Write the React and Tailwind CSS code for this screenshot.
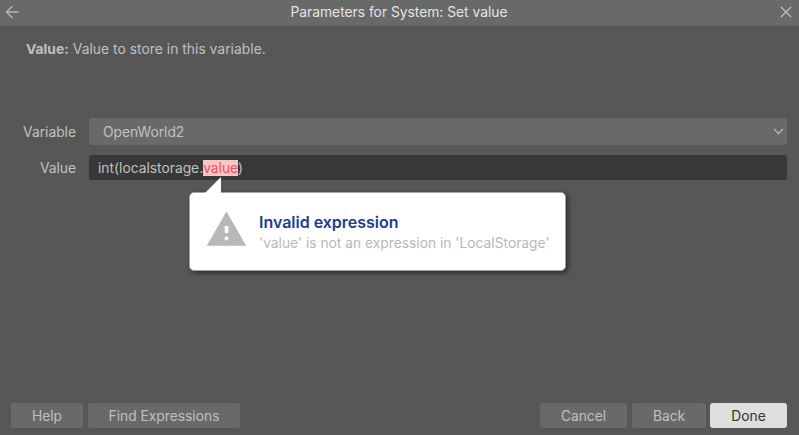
import React from "react";

const Button = ({ className, children }) => (
  <button
    className={`h-[25px] rounded-[3px] text-[13.8px] leading-[26px] ${className}`}
  >
    {children}
  </button>
);

const ErrorTip = () => (
  <div className="absolute left-[100px] top-[37px] w-[377px] h-[79px] rounded-[5px] border border-[#a3a3a3] bg-white shadow-[2px_2px_5px_rgba(0,0,0,0.5)] flex pl-[15px] pt-[15px]">
    {/* Pointer */}
    <svg
      className="absolute left-[15px] -top-[16px] w-[17px] h-[17px]"
      viewBox="0 0 17 17"
    >
      <path d="M0 17V16L16 0V17z" fill="#fff" />
    </svg>

    <svg className="w-[43px] h-[43px] shrink-0" viewBox="0 0 24 24">
      <path
        fill="#b8b8b8"
        d="M1 21h22L12 2 1 21zm12-3h-2v-2h2v2zm0-4h-2v-4h2v4z"
      />
    </svg>
    <div className="ml-[11px] pt-[3px] whitespace-nowrap">
      <h2 className="text-[16px] leading-[22px] font-semibold tracking-[-0.02px] text-[#1a3c94]">
        Invalid expression
      </h2>
      <p className="text-[13.8px] leading-5 text-[#b8b8b8]">
        'value' is not an expression in 'LocalStorage'
      </p>
    </div>
  </div>
);

const App = () => {
  return (
    <div className="w-full h-screen overflow-hidden flex flex-col bg-[#575757] text-[#c0c0c0] font-['Inter',sans-serif] text-[13.8px]">
      {/* Title bar */}
      <header className="h-[26px] shrink-0 bg-[#696969] flex items-center justify-between pl-[5px] pr-[6px]">
        <svg
          className="w-[14px] h-[14px]"
          viewBox="0 0 14 14"
          fill="none"
          stroke="#b8b8b8"
          strokeWidth="1.4"
        >
          <path d="M7.5 0L1.5 6l6 6M1.5 6h12" />
        </svg>
        <h1 className="text-[#e4e4e4] leading-6 pb-0.5">
          Parameters for System: Set value
        </h1>
        <svg
          className="w-[14px] h-[14px]"
          viewBox="0 0 14 14"
          fill="none"
          stroke="#c0c0c0"
          strokeWidth="1.3"
        >
          <path d="M2 1l10 10M12 1L2 11" />
        </svg>
      </header>

      <p className="mt-[13px] ml-[26px] leading-5 tracking-[0.04px]">
        <b className="font-bold">Value:</b> Value to store in this variable.
      </p>

      {/* Parameters */}
      <div className="mt-[59px] pr-3 flex flex-col gap-[10px]">
        <div className="flex items-center">
          <label className="w-[76px] mr-[13px] pt-px text-right">
            Variable
          </label>
          <div className="flex-1 h-[27px] rounded-[3px] bg-[#696969] flex items-center justify-between pl-[14px] pr-[3px]">
            <span className="pt-px">OpenWorld2</span>
            <svg
              className="w-[11px] h-[7px]"
              viewBox="0 0 11 7"
              fill="none"
              stroke="#b8b8b8"
              strokeWidth="1.3"
            >
              <path d="M1 1l4.5 4.5L10 1" />
            </svg>
          </div>
        </div>
        <div className="flex items-center">
          <label className="w-[76px] mr-[13px] pt-px text-right">Value</label>
          <div className="relative flex-1 h-[25px] rounded-[3px] bg-[#383838] flex items-center pl-[9px]">
            <span className="pt-px">int(localstorage.</span>
            <span className="h-4 leading-[17px] bg-[#f9c6c6] text-[#f4505f]">
              value
            </span>
            <span className="pt-px">)</span>
            <ErrorTip />
          </div>
        </div>
      </div>

      {/* Actions */}
      <footer className="mt-auto mb-[7px] pl-[11px] pr-3 flex gap-[5px]">
        <Button className="w-[72px] bg-[#696969]">Help</Button>
        <Button className="w-[152px] bg-[#696969]">Find Expressions</Button>
        <Button className="ml-auto w-[87px] bg-[#696969]">Cancel</Button>
        <Button className="w-[74px] bg-[#696969]">Back</Button>
        <Button className="-ml-px w-[77px] bg-[#dedede] text-[#333]">
          Done
        </Button>
      </footer>
    </div>
  );
};

export default App;
